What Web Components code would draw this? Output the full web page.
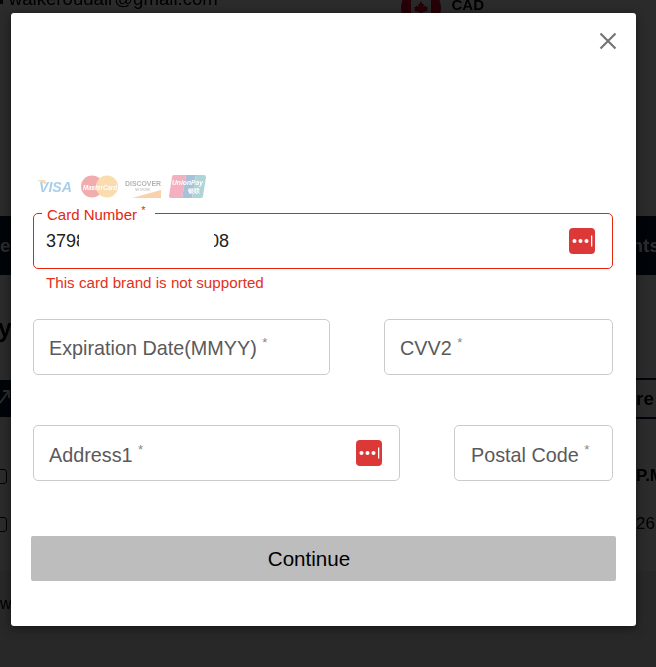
<!DOCTYPE html>
<html>
<head>
<meta charset="utf-8">
<title>Card form</title>
<style>
  html, body { margin: 0; height: 667px; overflow: hidden; background: #fff; }
  body { font-family: "Liberation Sans", Arial, sans-serif; position: relative; }
</style>
</head>
<body>
<checkout-backdrop></checkout-backdrop>
<card-modal>
  <card-logos></card-logos>
  <card-field slot="card" error="This card brand is not supported" icon></card-field>
  <float-field slot="row1" label="Expiration Date(MMYY)" style="width:297px;--label-pad:2px"></float-field>
  <float-field slot="row1" label="CVV2" style="width:229px;--label-pad:2px"></float-field>
  <float-field slot="row2" label="Address1" icon style="width:367px;--label-pad:4px"></float-field>
  <float-field slot="row2" label="Postal Code" style="width:159px;--label-pad:4px;--label-left:16px"></float-field>
</card-modal>

<script>
const LP_ICON = `
  <svg width="26" height="26" viewBox="0 0 26 26" aria-hidden="true">
    <rect width="26" height="26" rx="4" fill="#dd3838"/>
    <circle cx="5.5" cy="13" r="2" fill="#fff"/>
    <circle cx="11.5" cy="13" r="2" fill="#fff"/>
    <circle cx="17.5" cy="13" r="2" fill="#fff"/>
    <rect x="22" y="7.5" width="1.3" height="11" fill="#fff"/>
  </svg>`;

// whatever sits behind the dialog, dimmed by the overlay
class CheckoutBackdrop extends HTMLElement {
  constructor() {
    super();
    this.attachShadow({ mode: 'open' });
    this.shadowRoot.innerHTML = `
      <style>
        :host { display: block; position: absolute; inset: 0; overflow: hidden; color: #000; }
        .page { display: flex; flex-direction: column; height: 667px; filter: blur(0.4px); }
        .row { display: flex; justify-content: space-between; align-items: center; flex: none; }
        .top { align-items: flex-start; margin-top: -12px; height: 228px; }
        .dot { width: 3px; height: 5px; margin-top: 11px; background: #0b1a33; flex: none; }
        .email { font-size: 18.6px; line-height: 22px; margin: 0 0 0 5px; width: 391px; flex: none; }
        .flag { width: 40px; height: 40px; border-radius: 50%; flex: none;
                background: linear-gradient(90deg, #d80027 0 25%, #f0f0f0 25% 75%, #d80027 75%);
                display: flex; align-items: center; justify-content: center; }
        .cad { font-size: 15px; font-weight: 700; margin: 8px 172px 0 10px; }
        .band { height: 59px; background: #0b1a33; color: #fff; font-size: 19px; font-weight: 700; }
        .band span:last-child { margin-right: -4px; }
        .heading { height: 104px; font-size: 25px; font-weight: 700; align-items: flex-start; padding-top: 39px; box-sizing: border-box; }
        .heading span { line-height: 28px; margin-left: -16px; }
        .tools { height: 39px; }
        .navy { width: 11px; height: 37px; background: #0b1a33; overflow: hidden; }
        .outline { width: 20px; padding-left: 20px; height: 37px; border: solid #0b1a33; border-width: 2px 0; font-size: 19px; font-weight: 700;
                   line-height: 37px; color: #000; white-space: nowrap; }
        .rowline { height: 48px; font-size: 17px; }
        .gap { height: 34px; }
        .check { width: 13px; height: 13px; border: 1.5px solid #000; border-radius: 3px; margin-left: -8px; flex: none; }
        .cut { width: 20px; overflow: hidden; white-space: nowrap; }
        .foot { flex: 1; background: #e9eaeb; font-size: 16px; padding-top: 24px; }
        .foot span { margin-left: -9px; }
      </style>
      <div class="page">
        <div class="row top">
          <div class="dot"></div>
          <div class="email">walkeroudair@gmail.com</div>
          <div class="flag"><svg width="16" height="16" viewBox="0 0 16 16"><path d="M8 1 9.6 4.2 11 3.6 10.4 7 12.6 5.6 13 7 15 7 14 9.5 15 10.5 9 12.5 8.6 15H7.4L7 12.5 1 10.5 2 9.5 1 7 3 7 3.4 5.6 5.6 7 5 3.6 6.4 4.2Z" fill="#d80027"/></svg></div>
          <div class="cad">CAD</div>
        </div>
        <div class="row band"><span>er</span><span>nts</span></div>
        <div class="row heading"><span>ay</span></div>
        <div class="row tools">
          <div class="navy"><svg width="11" height="37" viewBox="0 0 11 37"><path d="M0 23 9 11M3 11h6v7" fill="none" stroke="#fff" stroke-width="2"/></svg></div>
          <div class="outline"><span>re</span></div>
        </div>
        <div class="gap"></div>
        <div class="row rowline"><div class="check"></div><strong class="cut">P.M</strong></div>
        <div class="row rowline"><div class="check"></div><span class="cut">26</span></div>
        <div class="row" style="height:23px"></div>
        <div class="foot"><span>ow</span></div>
      </div>
      <div style="position:absolute;inset:0;background:rgba(0,0,0,.83)"></div>`;
  }
}

// the white dialog
class CardModal extends HTMLElement {
  constructor() {
    super();
    this.attachShadow({ mode: 'open' });
    this.shadowRoot.innerHTML = `
      <style>
        :host { display: block; position: absolute; left: 11px; top: 13px; width: 625px; height: 613px;
                background: #fff; border-radius: 3px; box-sizing: border-box; padding: 162px 23px 0 22px;
                box-shadow: 0 2px 10px rgba(0,0,0,.5); }
        .close { position: absolute; left: 588px; top: 19px; display: block; }
        .row { display: flex; justify-content: space-between; }
        .row1 { margin-top: 28px; }
        .row2 { margin-top: 50px; }
        button { display: block; width: 585px; height: 45px; margin: 55px 0 0 -2px; padding: 0 29px 0 0; border: 0; border-radius: 2px;
                 background: #bdbdbd; color: #000; font: 20.6px "Liberation Sans", Arial, sans-serif; }
      </style>
      <svg class="close" width="18" height="18" viewBox="0 0 18 18" aria-hidden="true">
        <path d="M1.5 1.5l15 15M16.5 1.5l-15 15" stroke="#757575" stroke-width="2.2" fill="none"/>
      </svg>
      <slot></slot>
      <slot name="card"></slot>
      <div class="row row1"><slot name="row1"></slot></div>
      <div class="row row2"><slot name="row2"></slot></div>
      <button type="button">Continue</button>`;
  }
}

// accepted brands, all washed out as in the disabled state
class CardLogos extends HTMLElement {
  constructor() {
    super();
    this.attachShadow({ mode: 'open' });
    this.shadowRoot.innerHTML = `
      <style>
        :host { display: block; height: 38px; }
        svg { display: block; margin-left: 4px; opacity: .38; }
        text { font-family: "Liberation Sans", Arial, sans-serif; }
      </style>
      <svg width="172" height="24" viewBox="0 0 172 24">
        <path d="M0 5 8 5 10 10Z" fill="#e8a33d"/>
        <text x="2" y="16.5" font-size="15" font-weight="700" font-style="italic" fill="#1a7fc8" textLength="33" lengthAdjust="spacingAndGlyphs">VISA</text>
        <circle cx="55" cy="11.5" r="11" fill="#dd2b2b"/>
        <circle cx="70" cy="11.5" r="11" fill="#f3a530"/>
        <text x="46" y="14.5" font-size="8" font-weight="700" font-style="italic" fill="#fff" textLength="34" lengthAdjust="spacingAndGlyphs">MasterCard</text>
        <path d="M95 23 124 15V23Z" fill="#f08a24"/>
        <text x="88" y="11" font-size="8" font-weight="700" fill="#333" textLength="36" lengthAdjust="spacingAndGlyphs">DISCOVER</text>
        <text x="98" y="15.5" font-size="3" fill="#333">NETWORK</text>
        <path d="M135 2a2 2 0 0 1 2-2h12l-4 23h-11a2 2 0 0 1-2-2Z" fill="#e0315c"/>
        <path d="M149 0h10l-4 23h-10Z" fill="#1d5f9c"/>
        <path d="M159 0h8a2 2 0 0 1 2 2l-3 19a2 2 0 0 1-2 2h-9Z" fill="#2d8f96"/>
        <text x="135" y="10" font-size="7" font-weight="700" font-style="italic" fill="#fff" textLength="31" lengthAdjust="spacingAndGlyphs">UnionPay</text>
        <text x="151" y="18" font-size="6" font-weight="700" fill="#fff">&#38134;&#32852;</text>
      </svg>`;
  }
}

// outlined field with a floating label, in its error state
class CardField extends HTMLElement {
  constructor() {
    super();
    this.attachShadow({ mode: 'open' });
    this.shadowRoot.innerHTML = `
      <style>
        :host { display: block; position: relative; }
        .box { height: 56px; box-sizing: border-box; border: 1px solid #e5260e; border-radius: 5px;
               display: flex; align-items: center; justify-content: space-between; padding: 0 17px 0 12px; }
        .value { display: flex; font-size: 18px; color: #222; }
        .a { width: 33px; overflow: hidden; }
        .b { width: 15px; overflow: hidden; margin-left: 135px; direction: rtl; }
        svg { display: block; }
        .legend { position: absolute; left: 9px; top: -5px; padding: 0 10px 0 5px; background: #fff;
                  font-size: 15px; line-height: 14px; color: #e5260e; }
        sup { font-size: 11px; line-height: 0; }
        .err { margin: 6px 0 0 13px; font-size: 15.2px; line-height: 16px; color: #e5301a; }
      </style>
      <div class="box">
        <div class="value"><span class="a">3798</span><span class="b">08</span></div>
        ${LP_ICON}
      </div>
      <div class="legend">Card Number <sup>*</sup></div>
      <div class="err"></div>`;
  }

  connectedCallback() {
    this.shadowRoot.querySelector('.err').textContent = this.getAttribute('error');
  }
}

class FloatField extends HTMLElement {
  constructor() {
    super();
    this.attachShadow({ mode: 'open' });
    this.shadowRoot.innerHTML = `
      <style>
        :host { display: block; }
        .box { height: 56px; box-sizing: border-box; border: 1px solid #cbcbcb; border-radius: 5px; background: #fff;
               display: flex; align-items: center; justify-content: space-between; padding: 0 17px 0 var(--label-left, 15px); }
        .label { font-size: 19.8px; color: #5a5a5a; white-space: nowrap; padding-top: var(--label-pad, 0); }
        sup { font-size: 13px; line-height: 0; color: #888; }
        svg { display: block; }
      </style>
      <div class="box"><span class="label"><span class="t"></span> <sup>*</sup></span><span class="i"></span></div>`;
  }

  connectedCallback() {
    this.shadowRoot.querySelector('.t').textContent = this.getAttribute('label');
    if (this.hasAttribute('icon')) this.shadowRoot.querySelector('.i').innerHTML = LP_ICON;
  }
}

customElements.define('checkout-backdrop', CheckoutBackdrop);
customElements.define('card-modal', CardModal);
customElements.define('card-logos', CardLogos);
customElements.define('card-field', CardField);
customElements.define('float-field', FloatField);
</script>
</body>
</html>
